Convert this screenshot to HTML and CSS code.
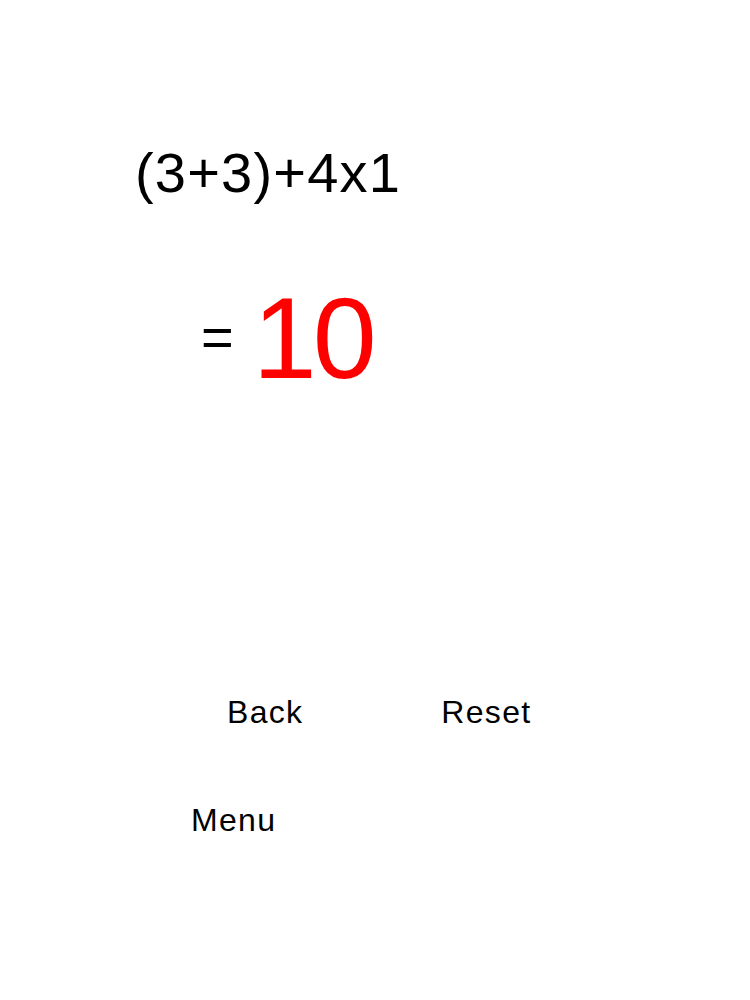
FILE: index.html
```html
<!DOCTYPE html>
<html lang="en">
<head>
<meta charset="utf-8">
<title>Calculator</title>
<link rel="stylesheet" href="styles.css">
</head>
<body>
<main class="calc">
  <div class="expr">(3+3)+4x1</div>
  <div class="result">
    <span class="eq">=</span>
    <span class="value">10</span>
  </div>
  <div class="actions">
    <button class="btn">Back</button>
    <button class="btn">Reset</button>
  </div>
  <button class="btn menu">Menu</button>
</main>
</body>
</html>
```

FILE: styles.css
```css
html, body {
  margin: 0;
  padding: 0;
  background: #ffffff;
}
body {
  font-family: "Liberation Sans", Arial, sans-serif;
  color: #000000;
  width: 750px;
  height: 1000px;
  overflow: hidden;
}
.calc {
  display: flex;
  flex-direction: column;
  align-items: flex-start;
  padding-top: 145px;
}
.expr {
  margin-left: 135px;
  font-size: 56px;
  line-height: 1;
  letter-spacing: 1.2px;
  white-space: nowrap;
}
.result {
  margin-top: 80px;
  padding-left: 201px;
  display: flex;
  align-items: flex-start;
  gap: 19px;
}
.eq {
  font-size: 56px;
  line-height: 1;
  margin-top: 28px;
}
.value {
  font-size: 115px;
  line-height: 1;
  letter-spacing: -4px;
  color: #ff0000;
}
.actions {
  margin-top: 300px;
  padding-left: 227px;
  display: flex;
  gap: 138px;
}
.btn {
  background: none;
  border: 0;
  padding: 0;
  margin: 0;
  font-family: inherit;
  font-size: 32px;
  line-height: 1;
  letter-spacing: 1.3px;
  color: #000000;
}
.menu {
  margin-top: 76px;
  margin-left: 191px;
}
```
